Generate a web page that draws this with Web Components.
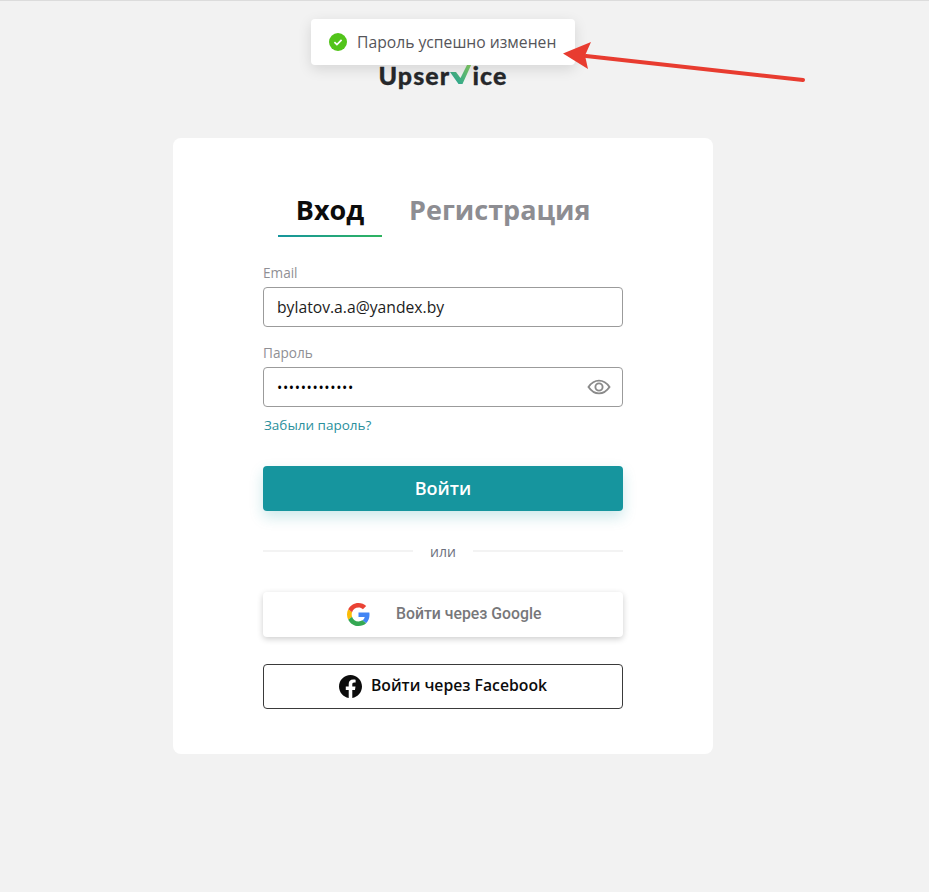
<!DOCTYPE html>
<html lang="ru">
<head>
<meta charset="utf-8">
<title>Upservice</title>
<style>
html, body { margin: 0; padding: 0; }
body { background: #f2f2f2; font-family: "Open Sans", sans-serif; }
</style>
</head>
<body>
<login-page>
    <status-toast slot="overlay">Пароль успешно изменен</status-toast>
    <note-arrow slot="overlay"></note-arrow>
    <brand-logo slot="header"></brand-logo>
    <login-card>
        <login-tabs slot="tabs"></login-tabs>
        <text-field label="Email" value="bylatov.a.a@yandex.by"></text-field>
        <text-field label="Пароль" value="•••••••••••••" password></text-field>
        <a-link slot="forgot">Забыли пароль?</a-link>
        <submit-button slot="submit">Войти</submit-button>
        <or-divider slot="divider">или</or-divider>
        <google-button slot="social">Войти через Google</google-button>
        <facebook-button slot="social">Войти через Facebook</facebook-button>
    </login-card>
</login-page>

<script>
(function(){

    // Small helper: every component is just a class with a shadow root filled from a string
    function define(name, html, setup) {
        customElements.define(name, class extends HTMLElement {
            constructor() {
                super();
                this.attachShadow({ mode: 'open' }).innerHTML = html;
                if (setup) setup(this);
            }
        });
    }

    // Page frame, overlay items sit on top of the flow. Right padding keeps the column left of centre
    define('login-page', `
    <style>
    :host { display: block; position: relative; height: 892px; box-sizing: border-box; border-top: 1px solid #dcdcdc; overflow: hidden; }
    main { display: flex; flex-direction: column; align-items: center; padding: 60px 43px 0 0; }
    .cardwrap { margin-top: 49px; }
    </style>
    <slot name="overlay"></slot>
    <main>
        <slot name="header"></slot>
        <div class="cardwrap"><slot></slot></div>
    </main>`);

    // Logo: word in two parts with the check mark standing in for the v
    define('brand-logo', `
    <style>
    :host { display: flex; align-items: center; height: 28px; color: #26282b; font: 900 25px/28px Lato, sans-serif; letter-spacing: 1.1px; -webkit-text-stroke: 0.3px #26282b; }
    svg { display: block; margin: -3px 0 0 -1px; }
    </style>
    <span>Upser</span>
    <svg width="24" height="24" viewBox="0 0 24 24">
        <defs><linearGradient id="g" x1="0" y1="1" x2="1" y2="0">
            <stop offset="0" stop-color="#1a9c96"/><stop offset="1" stop-color="#8ed35f"/>
        </linearGradient></defs>
        <path d="M1 10 L7 10 L11.5 16 L19 1 L23 1 L13.5 22 L9.5 22 Z" fill="url(#g)"/>
    </svg>
    <span style="margin-left:-1px">ice</span>`);

    // Success toast
    define('status-toast', `
    <style>
    :host { position: absolute; left: 311px; top: 18px; z-index: 2; display: flex; align-items: center; gap: 10px; width: 264px; height: 46px; box-sizing: border-box; padding-left: 18px; background: #fff; border-radius: 4px; box-shadow: 0 4px 14px rgba(0,0,0,.12); color: #55555a; font: 400 15.7px "Open Sans", sans-serif; white-space: nowrap; }
    svg { display: block; flex: none; }
    </style>
    <svg width="18" height="18" viewBox="0 0 18 18">
        <circle cx="9" cy="9" r="9" fill="#52c41a"/>
        <path d="M5.4 9.2 L7.9 11.6 L12.6 6.8" fill="none" stroke="#fff" stroke-width="1.7"/>
    </svg>
    <slot></slot>`);

    // Red annotation arrow drawn over the screenshot
    define('note-arrow', `
    <style>
    :host { position: absolute; left: 560px; top: 40px; z-index: 3; display: block; width: 250px; height: 45px; }
    svg { display: block; }
    </style>
    <svg width="250" height="45" viewBox="0 0 250 45">
        <path d="M243 39 L26 15" stroke="#e83c30" stroke-width="4" stroke-linecap="round" fill="none"/>
        <path d="M3 12.5 L31 1 L25 14.5 L28 28 Z" fill="#e83c30"/>
    </svg>`);

    // White card
    define('login-card', `
    <style>
    :host { display: block; width: 540px; height: 616px; box-sizing: border-box; padding: 50px 90px 0; background: #fff; border-radius: 8px; }
    .fields { display: flex; flex-direction: column; gap: 16px; margin-top: 26px; }
    .forgot { margin-top: 8px; }
    .submit { margin-top: 31px; }
    .divider { margin-top: 29px; }
    .social { display: flex; flex-direction: column; gap: 27px; margin-top: 28px; }
    </style>
    <slot name="tabs"></slot>
    <div class="fields"><slot></slot></div>
    <div class="forgot"><slot name="forgot"></slot></div>
    <div class="submit"><slot name="submit"></slot></div>
    <div class="divider"><slot name="divider"></slot></div>
    <div class="social"><slot name="social"></slot></div>`);

    // Вход / Регистрация
    define('login-tabs', `
    <style>
    :host { display: flex; padding-left: 15px; font: 700 27px/44px "Open Sans", sans-serif; }
    .tab { box-sizing: border-box; height: 49px; text-align: center; white-space: nowrap; }
    .on { width: 104px; color: #0c0c0c; border-bottom: 2px solid; border-image: linear-gradient(90deg, #16959e, #2fb45f) 1; }
    .off { color: #8d8d92; margin-left: 27px; }
    </style>
    <div class="tab on">Вход</div>
    <div class="tab off">Регистрация</div>`);

    // Labelled input, attributes are read once the element exists
    customElements.define('text-field', class extends HTMLElement {
        constructor() {
            super();
            this.attachShadow({ mode: 'open' }).innerHTML = `
            <style>
            :host { display: block; }
            label { display: block; height: 20px; color: #8f8f94; font: 400 13.6px/20px "Open Sans", sans-serif; margin-bottom: 4px; }
            .box { display: flex; align-items: center; justify-content: space-between; height: 40px; box-sizing: border-box; padding: 0 11px 0 13px; border: 1px solid #9b9b9b; border-radius: 4px; color: #1c1c1c; font: 400 15.7px "Open Sans", sans-serif; }
            svg { display: none; }
            :host([password]) svg { display: block; }
            :host([password]) .val { font-size: 14px; letter-spacing: 0.65px; color: #000; }
            </style>
            <label></label>
            <div class="box">
                <span class="val"></span>
                <svg width="24" height="24" viewBox="0 0 24 24" fill="none" stroke="#8a8a8a" stroke-width="1.9">
                    <path d="M1.5 12 C4.5 7.6 8 5.6 12 5.6 C16 5.6 19.5 7.6 22.5 12 C19.5 16.4 16 18.4 12 18.4 C8 18.4 4.5 16.4 1.5 12 Z"/>
                    <circle cx="12" cy="12" r="3.6"/>
                </svg>
            </div>`;
        }
        connectedCallback() {
            this.shadowRoot.querySelector('label').textContent = this.getAttribute('label');
            this.shadowRoot.querySelector('.val').textContent = this.getAttribute('value');
        }
    });

    define('a-link', `
    <style>
    :host { display: block; padding-left: 1px; color: #2a8f9c; font: 400 13.5px/20px "Open Sans", sans-serif; }
    </style>
    <slot></slot>`);

    define('submit-button', `
    <style>
    :host { display: flex; align-items: center; justify-content: center; height: 45px; background: #16959e; border-radius: 4px; color: #fff; font: 600 18px "Open Sans", sans-serif; box-shadow: 0 6px 14px rgba(22,149,158,.22); }
    span { margin-top: -2px; }
    </style>
    <span><slot></slot></span>`);

    define('or-divider', `
    <style>
    :host { display: flex; align-items: center; height: 24px; color: #6c6f7d; font: 400 14px "Open Sans", sans-serif; }
    i { flex: 1; height: 2px; background: #f3f3f3; margin-top: -3px; }
    span { width: 60px; text-align: center; margin-top: -2px; }
    </style>
    <i></i><span><slot></slot></span><i></i>`);

    define('google-button', `
    <style>
    :host { display: flex; align-items: center; height: 45px; box-sizing: border-box; padding-left: 84px; background: #fff; border-radius: 4px; color: #77777a; font: 500 15.8px Roboto, sans-serif; box-shadow: 0 2px 6px rgba(0,0,0,.2); }
    svg { display: block; margin-right: 26px; }
    span { margin-top: -3px; }
    </style>
    <svg width="23" height="23" viewBox="0 0 48 48">
        <path fill="#4285F4" d="M46.98 24.55c0-1.57-.15-3.09-.38-4.55H24v9.02h12.94c-.58 2.96-2.26 5.48-4.78 7.18l7.73 6c4.51-4.18 7.09-10.36 7.09-17.65z"/>
        <path fill="#FBBC05" d="M10.53 28.59c-.48-1.45-.76-2.99-.76-4.59s.27-3.14.76-4.59l-7.98-6.19C.92 16.46 0 20.12 0 24c0 3.88.92 7.54 2.56 10.78l7.97-6.19z"/>
        <path fill="#EA4335" d="M24 9.5c3.54 0 6.71 1.22 9.21 3.6l6.85-6.85C35.9 2.38 30.47 0 24 0 14.62 0 6.51 5.38 2.56 13.22l7.98 6.19C12.43 13.72 17.74 9.5 24 9.5z"/>
        <path fill="#34A853" d="M24 48c6.48 0 11.93-2.13 15.89-5.81l-7.73-6c-2.15 1.45-4.92 2.3-8.16 2.3-6.26 0-11.57-4.22-13.47-9.91l-7.98 6.19C6.51 42.62 14.62 48 24 48z"/>
    </svg>
    <span><slot></slot></span>`);

    define('facebook-button', `
    <style>
    :host { display: flex; align-items: center; justify-content: center; gap: 9px; height: 45px; box-sizing: border-box; border: 1px solid #3a3a3a; border-radius: 4px; color: #0c0c0c; font: 600 15.75px "Open Sans", sans-serif; }
    svg { display: block; }
    span { margin-top: -3px; }
    </style>
    <svg width="23" height="23" viewBox="0 0 24 24">
        <path fill="#0c0c0c" d="M24 12.07C24 5.4 18.63 0 12 0S0 5.4 0 12.07c0 6.03 4.39 11.02 10.13 11.93v-8.44H7.08v-3.49h3.05V9.41c0-3.02 1.79-4.69 4.53-4.69 1.31 0 2.68.24 2.68.24v2.97h-1.51c-1.49 0-1.96.93-1.96 1.89v2.25h3.33l-.53 3.49h-2.8V24C19.61 23.09 24 18.1 24 12.07z"/>
    </svg>
    <span><slot></slot></span>`);

}) ();
</script>
</body>
</html>
